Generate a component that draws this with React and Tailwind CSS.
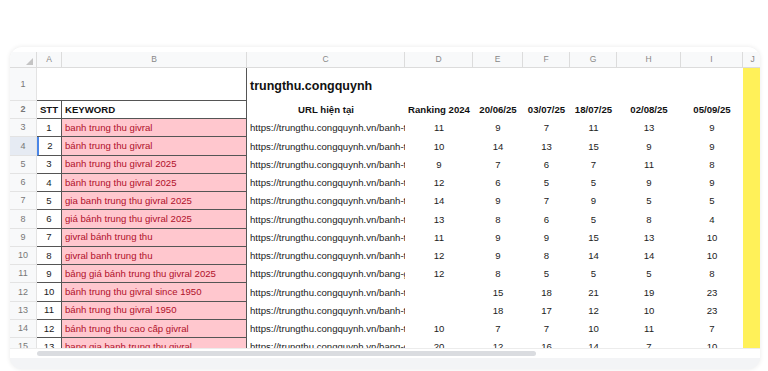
// Spreadsheet preview card: column letters, row numbers, keyword ranking table

const COLS = ["A", "B", "C", "D", "E", "F", "G", "H", "I", "J"];
const W = [
  "w-[25px]",
  "w-[185px]",
  "w-[158px]",
  "w-[68px]",
  "w-[50px]",
  "w-[47px]",
  "w-[47px]",
  "w-[64px]",
  "w-[62px]",
  "w-[20px]",
];

const rows = [
  [1, "banh trung thu givral", "banh-t", "11", "9", "7", "11", "13", "9"],
  [2, "bánh trung thu givral", "banh-t", "10", "14", "13", "15", "9", "9"],
  [3, "banh trung thu givral 2025", "banh-t", "9", "7", "6", "7", "11", "8"],
  [4, "bánh trung thu givral 2025", "banh-t", "12", "6", "5", "5", "9", "9"],
  [5, "gia banh trung thu givral 2025", "banh-t", "14", "9", "7", "9", "5", "5"],
  [6, "giá bánh trung thu givral 2025", "banh-t", "13", "8", "6", "5", "8", "4"],
  [7, "givral bánh trung thu", "banh-t", "11", "9", "9", "15", "13", "10"],
  [8, "givral banh trung thu", "banh-t", "12", "9", "8", "14", "14", "10"],
  [9, "bảng giá bánh trung thu givral 2025", "bang-g", "12", "8", "5", "5", "5", "8"],
  [10, "bánh trung thu givral since 1950", "banh-t", "", "15", "18", "21", "19", "23"],
  [11, "bánh trung thu givral 1950", "banh-t", "", "18", "17", "12", "10", "23"],
  [12, "bánh trung thu cao cấp givral", "banh-t", "10", "7", "7", "10", "11", "7"],
  [13, "bang gia banh trung thu givral", "bang-g", "20", "12", "16", "14", "7", "10"],
];

const headers = ["Ranking 2024", "20/06/25", "03/07/25", "18/07/25", "02/08/25", "05/09/25"];

function RowHead({ n, active, h }) {
  return (
    <div
      className={`w-[27px] shrink-0 ${h} flex items-center justify-center pt-[1px] border-b border-r border-[#e3e3e3] text-[9px] text-[#777] ${
        active ? "bg-[#e6ebf3]" : "bg-[#f8f9fa]"
      }`}
    >
      {n}
    </div>
  );
}

function DataRow({ r, idx }) {
  const [stt, kw, slug, ...nums] = r;
  const active = idx === 1;
  return (
    <div className="flex h-[18.25px]">
      <RowHead n={idx + 3} active={active} h="h-[18.25px]" />
      <div
        className={`${W[0]} shrink-0 flex items-center justify-center pt-[1px] border-b border-r border-[#555] bg-white text-[#222] ${
          active ? "border-l-2 border-l-[#4a86e8]" : ""
        }`}
      >
        {stt}
      </div>
      <div className={`${W[1]} shrink-0 flex items-center pt-[1px] px-[3px] border-b border-r border-[#555] bg-[#ffc7ce] text-[#b0102a] whitespace-nowrap overflow-hidden`}>
        {kw}
      </div>
      <div className={`${W[2]} shrink-0 flex items-center pt-[1px] pl-[3px] whitespace-nowrap overflow-hidden text-[#222]`}>
        https://trungthu.congquynh.vn/{slug}
      </div>
      {nums.map((v, i) => (
        <div key={i} className={`${W[i + 3]} shrink-0 flex items-center justify-center pt-[1px] text-[#222]`}>
          {v}
        </div>
      ))}
      <div className={`${W[9]} shrink-0 bg-[#fff159]`} />
    </div>
  );
}

export default function App() {
  return (
    <div className="w-[768px] h-[371px] bg-white pt-[47px] pl-[10px] font-['Liberation_Sans',Arial,sans-serif]">
      <div className="w-[750px] h-[322px] rounded-[12px] bg-[#f3f4f6] shadow-[0_0_5px_rgba(0,0,0,0.09)] overflow-hidden flex flex-col">
        <div className="h-[5px] bg-white" />
        <div className="h-[296px] bg-white overflow-hidden text-[9.6px]">
          {/* column letters */}
          <div className="flex h-[16px] bg-[#f8f9fa] border-b border-[#dcdcdc] text-[8.5px] text-[#888]">
            <div className="w-[27px] shrink-0 border-r border-[#dcdcdc] relative">
              <svg className="absolute right-[3px] bottom-[2px]" width="7" height="7" viewBox="0 0 7 7">
                <path d="M7 0 L7 7 L0 7 Z" fill="#c4c4c4" />
              </svg>
            </div>
            {COLS.map((c, i) => (
              <div key={c} className={`${W[i]} shrink-0 flex items-center justify-center border-r border-[#dcdcdc]`}>
                {c}
              </div>
            ))}
          </div>

          {/* row 1 title */}
          <div className="flex h-[33px]">
            <RowHead n={1} h="h-[33px]" />
            <div className="w-[210px] shrink-0 border-b border-r border-[#555]" />
            <div className={`${W[2]} shrink-0 flex items-center pt-[3px] pl-[3px] text-[12.5px] font-bold text-[#111] whitespace-nowrap`}>
              trungthu.congquynh
            </div>
            <div className="w-[338px] shrink-0" />
            <div className={`${W[9]} shrink-0 bg-[#fff159]`} />
          </div>

          {/* row 2 headers */}
          <div className="flex h-[18px] font-bold text-[#111]">
            <RowHead n={2} h="h-[18px]" />
            <div className={`${W[0]} shrink-0 flex items-center justify-center pt-[1px] border-b border-r border-[#555]`}>STT</div>
            <div className={`${W[1]} shrink-0 flex items-center pt-[1px] px-[3px] border-b border-r border-[#555]`}>KEYWORD</div>
            <div className={`${W[2]} shrink-0 flex items-center justify-center pt-[1px]`}>URL hiện tại</div>
            {headers.map((h, i) => (
              <div key={h} className={`${W[i + 3]} shrink-0 flex items-center justify-center pt-[1px] whitespace-nowrap`}>
                {h}
              </div>
            ))}
            <div className={`${W[9]} shrink-0 bg-[#fff159]`} />
          </div>

          {rows.map((r, i) => (
            <DataRow key={i} r={r} idx={i} />
          ))}
        </div>

        {/* horizontal scrollbar */}
        <div className="h-[10px] bg-white border-t border-[#ececec] flex items-center">
          <div className="w-[27px] shrink-0" />
          <div className="w-[499px] h-[5px] rounded-full bg-[#dadce0]" />
        </div>
        <div className="flex-1 bg-[#f3f4f6]" />
      </div>
    </div>
  );
}
